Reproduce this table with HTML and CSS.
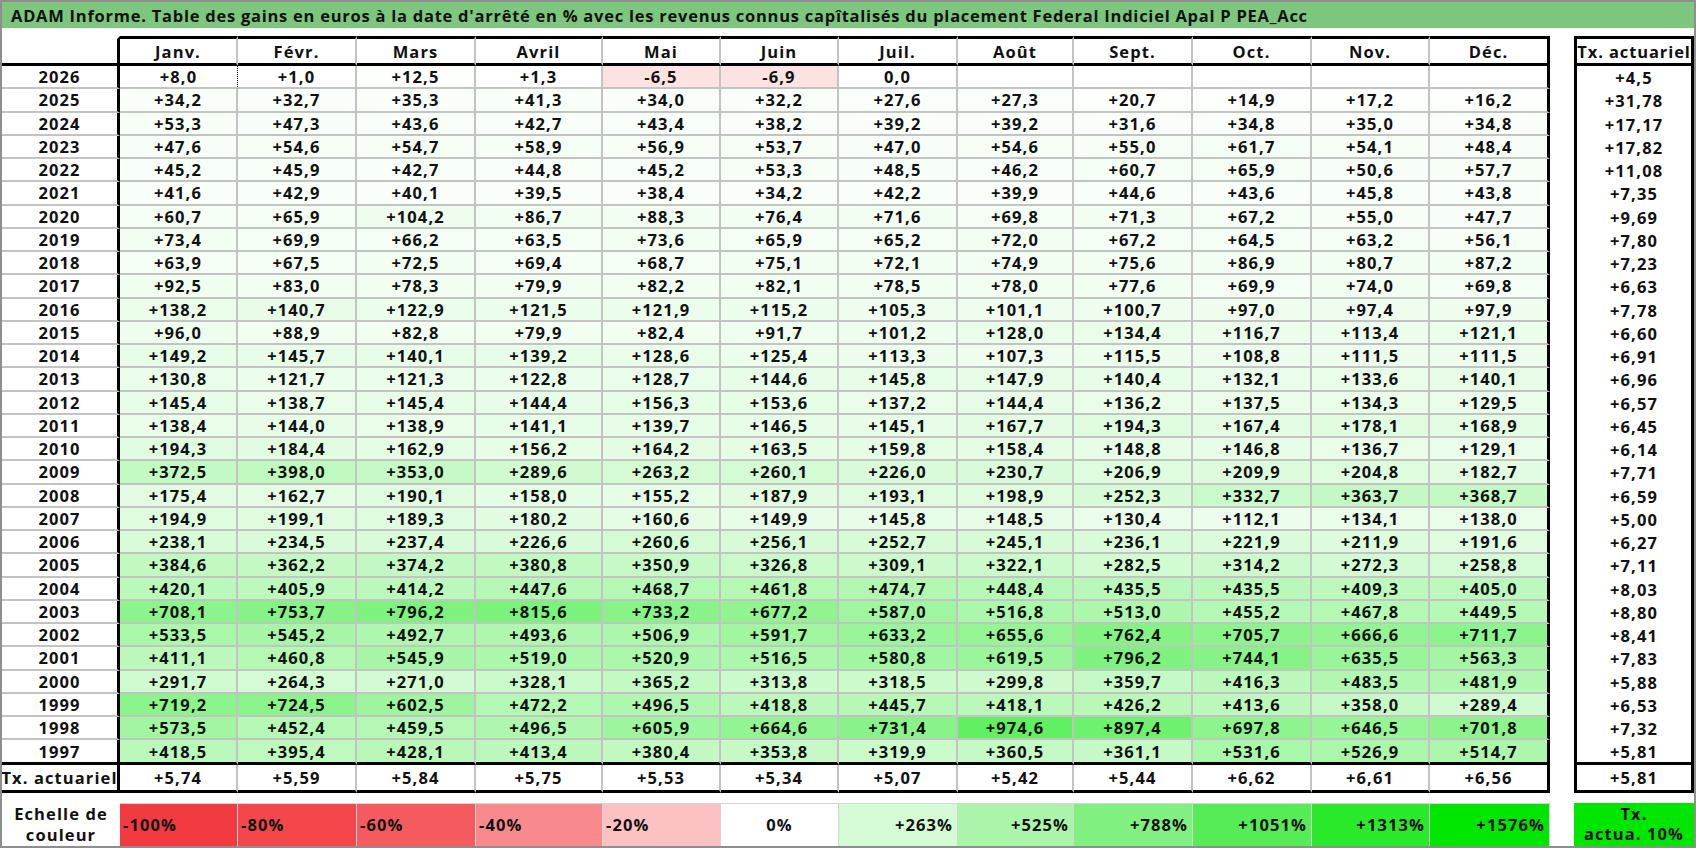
FILE: index.html
```html
<!DOCTYPE html>
<html lang="fr">
<head>
<meta charset="utf-8">
<title>ADAM Informe</title>
<link rel="stylesheet" href="styles.css">
</head>
<body>
<div class="sheet">
  <div class="title">ADAM Informe. Table des gains en euros à la date d'arrêté en % avec les revenus connus capîtalisés du placement Federal Indiciel Apal P PEA_Acc</div>
  <div class="grid" id="grid"></div>
</div>
<script src="app.js"></script>
</body>
</html>
```

FILE: styles.css
```css
* { box-sizing: border-box; }
html, body { margin: 0; padding: 0; background: #fff; }
body { font-family: "Open Sans", "Liberation Sans", sans-serif; color: #000; }

.sheet {
  width: 1696px;
  height: 848px;
  border: 2px solid #8e8e8e;
  overflow: hidden;
  background: #fff;
}

.title {
  height: 26px;
  background: #7cc77d;
  font-weight: 700;
  font-size: 16.5px;
  line-height: 28px;
  padding-left: 9px;
  white-space: nowrap;
  letter-spacing: 0.75px;
  color: #111;
}

.grid {
  margin-top: 8px;
  display: grid;
  grid-template-columns: 118px 118px 119px 119px 127px 118px 118px 119px 116px 119px 119px 118px 120px 24px 120px;
  grid-template-rows: 30px repeat(29, 23.25px) 24.5px 28px 10px 43px;
  font-weight: 700;
  font-size: 16.5px;
  letter-spacing: 1.1px;
}

.grid > div {
  display: flex;
  align-items: center;
  justify-content: center;
  white-space: nowrap;
  color: #111;
}

.yr { border-right: 3px solid #000; border-bottom: 2px solid #c3c3c3; }
.c { border-right: 2px solid #c3c3c3; border-bottom: 2px solid #c3c3c3; }
.c.last { border-right: 3px solid #000; }
.c.dot { border-right: 1px dotted #000; }
.tx { border-left: 3px solid #000; border-right: 3px solid #000; }
.grid > .tx.hd { letter-spacing: 0.9px; }

.hd { border-top: 3px solid #000; border-bottom: 3px solid #000; }
.yr.hd { border-top: 3px solid #fff; }
.end { border-bottom: 3px solid #000; }
.sum { border-bottom: 3px solid #000; }

.gaprow { grid-column: 1 / -1; }

.lab {
  flex-direction: column;
  line-height: 21px;
  text-align: center;
}
.lg {
  border-top: 1px solid #d4d4d4;
  border-right: 1px solid #d4d4d4;
}
.grid > .lg.l { justify-content: flex-start; padding-left: 3px; }
.grid > .lg.r { justify-content: flex-end; padding-right: 4px; }
.tx10 {
  background: #00e600;
  flex-direction: column;
  line-height: 20px;
  text-align: center;
}
```

FILE: app.js
```js
(function () {
  var months = ["Janv.", "Févr.", "Mars", "Avril", "Mai", "Juin", "Juil.", "Août", "Sept.", "Oct.", "Nov.", "Déc."];
  var rows = [
    ["2026", "+8,0 +1,0 +12,5 +1,3 -6,5 -6,9 0,0 . . . . .", "+4,5"],
    ["2025", "+34,2 +32,7 +35,3 +41,3 +34,0 +32,2 +27,6 +27,3 +20,7 +14,9 +17,2 +16,2", "+31,78"],
    ["2024", "+53,3 +47,3 +43,6 +42,7 +43,4 +38,2 +39,2 +39,2 +31,6 +34,8 +35,0 +34,8", "+17,17"],
    ["2023", "+47,6 +54,6 +54,7 +58,9 +56,9 +53,7 +47,0 +54,6 +55,0 +61,7 +54,1 +48,4", "+17,82"],
    ["2022", "+45,2 +45,9 +42,7 +44,8 +45,2 +53,3 +48,5 +46,2 +60,7 +65,9 +50,6 +57,7", "+11,08"],
    ["2021", "+41,6 +42,9 +40,1 +39,5 +38,4 +34,2 +42,2 +39,9 +44,6 +43,6 +45,8 +43,8", "+7,35"],
    ["2020", "+60,7 +65,9 +104,2 +86,7 +88,3 +76,4 +71,6 +69,8 +71,3 +67,2 +55,0 +47,7", "+9,69"],
    ["2019", "+73,4 +69,9 +66,2 +63,5 +73,6 +65,9 +65,2 +72,0 +67,2 +64,5 +63,2 +56,1", "+7,80"],
    ["2018", "+63,9 +67,5 +72,5 +69,4 +68,7 +75,1 +72,1 +74,9 +75,6 +86,9 +80,7 +87,2", "+7,23"],
    ["2017", "+92,5 +83,0 +78,3 +79,9 +82,2 +82,1 +78,5 +78,0 +77,6 +69,9 +74,0 +69,8", "+6,63"],
    ["2016", "+138,2 +140,7 +122,9 +121,5 +121,9 +115,2 +105,3 +101,1 +100,7 +97,0 +97,4 +97,9", "+7,78"],
    ["2015", "+96,0 +88,9 +82,8 +79,9 +82,4 +91,7 +101,2 +128,0 +134,4 +116,7 +113,4 +121,1", "+6,60"],
    ["2014", "+149,2 +145,7 +140,1 +139,2 +128,6 +125,4 +113,3 +107,3 +115,5 +108,8 +111,5 +111,5", "+6,91"],
    ["2013", "+130,8 +121,7 +121,3 +122,8 +128,7 +144,6 +145,8 +147,9 +140,4 +132,1 +133,6 +140,1", "+6,96"],
    ["2012", "+145,4 +138,7 +145,4 +144,4 +156,3 +153,6 +137,2 +144,4 +136,2 +137,5 +134,3 +129,5", "+6,57"],
    ["2011", "+138,4 +144,0 +138,9 +141,1 +139,7 +146,5 +145,1 +167,7 +194,3 +167,4 +178,1 +168,9", "+6,45"],
    ["2010", "+194,3 +184,4 +162,9 +156,2 +164,2 +163,5 +159,8 +158,4 +148,8 +146,8 +136,7 +129,1", "+6,14"],
    ["2009", "+372,5 +398,0 +353,0 +289,6 +263,2 +260,1 +226,0 +230,7 +206,9 +209,9 +204,8 +182,7", "+7,71"],
    ["2008", "+175,4 +162,7 +190,1 +158,0 +155,2 +187,9 +193,1 +198,9 +252,3 +332,7 +363,7 +368,7", "+6,59"],
    ["2007", "+194,9 +199,1 +189,3 +180,2 +160,6 +149,9 +145,8 +148,5 +130,4 +112,1 +134,1 +138,0", "+5,00"],
    ["2006", "+238,1 +234,5 +237,4 +226,6 +260,6 +256,1 +252,7 +245,1 +236,1 +221,9 +211,9 +191,6", "+6,27"],
    ["2005", "+384,6 +362,2 +374,2 +380,8 +350,9 +326,8 +309,1 +322,1 +282,5 +314,2 +272,3 +258,8", "+7,11"],
    ["2004", "+420,1 +405,9 +414,2 +447,6 +468,7 +461,8 +474,7 +448,4 +435,5 +435,5 +409,3 +405,0", "+8,03"],
    ["2003", "+708,1 +753,7 +796,2 +815,6 +733,2 +677,2 +587,0 +516,8 +513,0 +455,2 +467,8 +449,5", "+8,80"],
    ["2002", "+533,5 +545,2 +492,7 +493,6 +506,9 +591,7 +633,2 +655,6 +762,4 +705,7 +666,6 +711,7", "+8,41"],
    ["2001", "+411,1 +460,8 +545,9 +519,0 +520,9 +516,5 +580,8 +619,5 +796,2 +744,1 +635,5 +563,3", "+7,83"],
    ["2000", "+291,7 +264,3 +271,0 +328,1 +365,2 +313,8 +318,5 +299,8 +359,7 +416,3 +483,5 +481,9", "+5,88"],
    ["1999", "+719,2 +724,5 +602,5 +472,2 +496,5 +418,8 +445,7 +418,1 +426,2 +413,6 +358,0 +289,4", "+6,53"],
    ["1998", "+573,5 +452,4 +459,5 +496,5 +605,9 +664,6 +731,4 +974,6 +897,4 +697,8 +646,5 +701,8", "+7,32"],
    ["1997", "+418,5 +395,4 +428,1 +413,4 +380,4 +353,8 +319,9 +360,5 +361,1 +531,6 +526,9 +514,7", "+5,81"]
  ];
  var sums = "+5,74 +5,59 +5,84 +5,75 +5,53 +5,34 +5,07 +5,42 +5,44 +6,62 +6,61 +6,56".split(" ");
  var legend = [
    ["-100%", "#f23b40", "l"], ["-80%", "#f3474c", "l"], ["-60%", "#f55a5e", "l"],
    ["-40%", "#f88a8d", "l"], ["-20%", "#fcc1c3", "l"], ["0%", "#ffffff", "m"],
    ["+263%", "#d5fbd5", "r"], ["+525%", "#aaf5aa", "r"], ["+788%", "#80f080", "r"],
    ["+1051%", "#55ec55", "r"], ["+1313%", "#2ae92a", "r"], ["+1576%", "#00e600", "r"]
  ];

  var grid = document.getElementById("grid");

  function cell(cls, text, bg) {
    var d = document.createElement("div");
    d.className = cls;
    if (text) d.textContent = text;
    if (bg) d.style.background = bg;
    grid.appendChild(d);
    return d;
  }

  function lines(cls, a, b) {
    var d = cell(cls, "");
    var s1 = document.createElement("span"); s1.textContent = a;
    var s2 = document.createElement("span"); s2.textContent = b;
    d.appendChild(s1); d.appendChild(s2);
    return d;
  }

  function color(s) {
    if (!s) return "";
    var v = parseFloat(s.replace(",", "."));
    if (v < 0) return "#fde2e2";
    var t = Math.min(v / 1576, 1);
    var r = Math.round(255 * (1 - t));
    var g = Math.round(255 - 25 * t);
    return "rgb(" + r + "," + g + "," + r + ")";
  }

  cell("yr hd", "");
  months.forEach(function (m, i) { cell("c hd" + (i === 11 ? " last" : ""), m); });
  cell("sp", "");
  cell("tx hd", "Tx. actuariel");

  rows.forEach(function (row, k) {
    var end = k === rows.length - 1 ? " end" : "";
    cell("yr" + end, row[0]);
    row[1].split(" ").forEach(function (v, i) {
      var val = v === "." ? "" : v;
      var cls = "c" + end + (i === 11 ? " last" : "") + (k === 0 && i === 0 ? " dot" : "");
      cell(cls, val, color(val));
    });
    cell("sp", "");
    cell("tx" + end, row[2]);
  });

  cell("yr sum", "Tx. actuariel");
  sums.forEach(function (v, i) { cell("c sum" + (i === 11 ? " last" : ""), v); });
  cell("sp", "");
  cell("tx sum", "+5,81");

  cell("gaprow", "");

  lines("lab", "Echelle de", "couleur");
  legend.forEach(function (l) { cell("lg " + l[2], l[0], l[1]); });
  cell("sp", "");
  lines("tx10", "Tx.", "actua. 10%");
})();
```
